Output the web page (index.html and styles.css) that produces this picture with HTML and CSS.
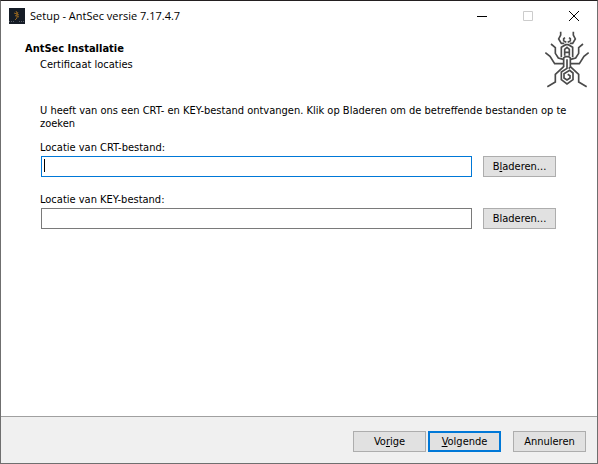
FILE: index.html
```html
<!DOCTYPE html>
<html lang="nl">
<head>
<meta charset="utf-8">
<title>Setup - AntSec versie 7.17.4.7</title>
<link rel="stylesheet" href="styles.css">
</head>
<body>
<div class="window">
  <header class="titlebar">
    <svg class="app-icon" viewBox="0 0 16 16" aria-hidden="true">
      <rect width="16" height="16" fill="#151c26"/>
      <path d="M7 3l1 2M9 4L8 6l2 1M5 5l3 1M8 5v5M6 8l2-1M10 9L8 8M8 10l-2 2" fill="none" stroke="#94641f"/>
      <path d="M0 13.500h6M10 13.500h6" stroke="#596069" stroke-dasharray="1 1"/>
    </svg>
    <span class="caption">Setup - AntSec versie 7.17.4.7</span>
    <div class="controls">
      <button class="control" type="button" aria-label="Minimaliseren"><svg viewBox="0 0 12 12"><path d="M1 6.500h10"/></svg></button>
      <button class="control" type="button" aria-label="Maximaliseren" disabled><svg viewBox="0 0 12 12"><path d="M1.500 1.500h9v9h-9z"/></svg></button>
      <button class="control" type="button" aria-label="Sluiten"><svg viewBox="0 0 12 12"><path d="M1 1l10 10M11 1L1 11"/></svg></button>
    </div>
  </header>
  <section class="heading">
    <div class="heading-text">
      <h1>AntSec Installatie</h1>
      <p>Certificaat locaties</p>
    </div>
    <svg class="logo" viewBox="24 18 144 174" aria-hidden="true">
      <path d="M77 20v10l-6 12 8 13h9M115 20v10l6 12-8 13h-9M94 52l-8-5v-6l4-3M98 52l8-5v-6l-4-3"/>
      <path d="M79 97V67l13-8h8l13 8v30M89 92V73l7-6 7 6v19M89 82h14"/>
      <path d="M48 57l13 11v17l9 14 15 4M144 57l-13 11v17l-9 14-15 4"/>
      <path d="M31 83l14 11 14 22h26M161 83l-14 11-14 22h-26"/>
      <path d="M37 185l24-14v-23l25-23M155 185l-24-14v-23l-25-23"/>
      <path d="M86 126v-27l5-4h10l5 4v27l-5 5M96 103v27l-17 11v23l17 13 18-13v-20l-10-8-17 10v13l9 6 9-6v-7l-7-4"/>
    </svg>
  </section>
  <main class="content">
    <p class="intro">U heeft van ons een CRT- en KEY-bestand ontvangen. Klik op Bladeren om de betreffende bestanden op te zoeken</p>
    <div class="field">
      <label for="crt">Locatie van CRT-bestand:</label>
      <div class="row"><input id="crt" class="active" type="text" autofocus><span class="caret"></span><button class="button" type="button">B<u>l</u>aderen...</button></div>
    </div>
    <div class="field">
      <label for="key">Locatie van KEY-bestand:</label>
      <div class="row"><input id="key" type="text"><button class="button" type="button">Bladeren...</button></div>
    </div>
  </main>
  <footer class="footer">
    <button class="button" type="button">Vo<u>r</u>ige</button>
    <button class="button primary" type="button"><u>V</u>olgende</button>
    <button class="button cancel" type="button">Annuleren</button>
  </footer>
</div>
</body>
</html>
```
FILE: styles.css
```css
* { box-sizing: border-box; }
body {
  margin: 0;
  font: 11px/13px "DejaVu Sans Condensed", "DejaVu Sans", sans-serif;
  color: #000;
}
h1, p { margin: 0; font-size: inherit; }
.window {
  display: flex;
  flex-direction: column;
  min-height: 100vh;
  border: 1px solid #6f6f6f;
  border-top-color: #231f20;
  background: #fff;
}
.titlebar { display: flex; align-items: center; height: 29px; padding-left: 8px; }
.app-icon { width: 16px; height: 16px; }
.caption { flex: 1; padding-left: 5px; font: 11px/16px "Open Sans", sans-serif; }
.controls { display: flex; }
.control {
  display: flex;
  align-items: center;
  justify-content: center;
  width: 46px;
  height: 29px;
  padding: 0;
  border: 0;
  background: none;
}
.control svg { width: 12px; height: 12px; fill: none; stroke: #000; }
.control:disabled svg { stroke: #ccc; }
.heading { display: flex; justify-content: space-between; height: 60px; padding: 1px 6px 0 24px; }
.heading-text { padding-top: 11px; }
.heading-text p { padding: 3px 0 0 15px; }
.logo {
  width: 48px;
  height: 58px;
  fill: none;
  stroke: #4a4a4a;
  stroke-width: 5;
}
.content { flex: 1; padding: 14px 28px 0 39px; }
.intro { padding-bottom: 11px; }
.field { padding: 0 13px 16px 0; }
.field label { display: block; padding-bottom: 2px; }
.row { display: flex; position: relative; gap: 11px; padding-left: 1px; }
.row input {
  flex: 1;
  min-width: 0;
  height: 21px;
  padding: 0 3px;
  border: 1px solid #7a7a7a;
  outline: none;
  background: #fff;
  caret-color: transparent;
  font: inherit;
}
.row .active { border-color: #0078d7; }
.caret {
  position: absolute;
  top: 3px;
  left: 4px;
  width: 1px;
  height: 13px;
  background: #000;
}
.button {
  width: 73px;
  height: 21px;
  padding: 0;
  border: 1px solid #adadad;
  background: #e1e1e1;
  color: #000;
  font: inherit;
}
.button u { text-underline-offset: 1px; }
.primary { border: 2px solid #0078d7; }
.footer {
  display: flex;
  justify-content: flex-end;
  gap: 2px;
  height: 47px;
  padding: 14px 11px 0;
  border-top: 1px solid #a0a0a0;
  background: #f0f0f0;
}
.cancel { margin-left: 10px; }
```
